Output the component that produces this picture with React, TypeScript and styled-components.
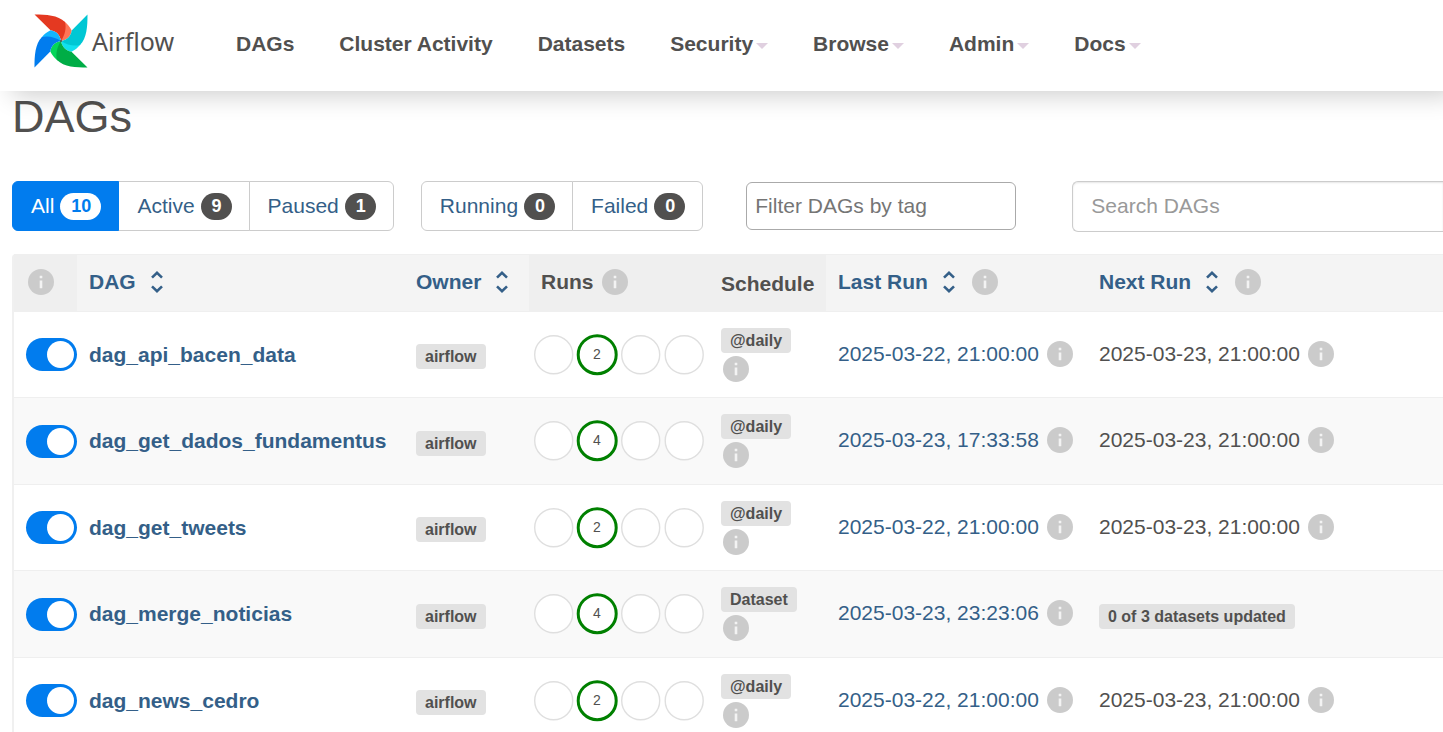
import React from "react";
import styled, { createGlobalStyle, css } from "styled-components";

const GlobalStyle = createGlobalStyle`
  *, *::before, *::after { box-sizing: border-box; }
  body {
    margin: 0;
    background: #fff;
    color: #51504f;
    font-family: "Liberation Sans", Arial, sans-serif;
    font-size: 21px;
    line-height: 30px;
    overflow-x: hidden;
  }
  a { color: #345f88; text-decoration: none; }
  button, input { font: inherit; }
`;

const Navbar = styled.header`
  position: relative;
  display: flex;
  align-items: center;
  height: 91px;
  padding: 0 34px 3px;
  background: #fff;
  box-shadow: 12px 4px 24px rgba(0, 0, 0, 0.2);
`;

const Brand = styled.a`
  display: flex;
  align-items: center;
  gap: 4px;
  width: 179px;
  padding-bottom: 6px;
  color: #51504f;
  font: 25px/30px "Noto Sans", sans-serif;
`;

const NavList = styled.nav`
  display: flex;
  gap: 45px;
`;

const NavLink = styled.a`
  display: flex;
  align-items: center;
  gap: 3px;
  padding-left: 23px;
  margin-right: -23px;
  color: #51504f;
  font-weight: bold;
`;

const Caret = styled.span`
  margin-top: 4px;
  border: 6px solid transparent;
  border-top-color: #e0d0e0;
  border-bottom: 0;
`;

const Main = styled.main`
  padding-left: 12px;
`;

const Title = styled.h1`
  margin: 0 0 38px;
  font-size: 45px;
  line-height: 52px;
  font-weight: normal;
`;

const Toolbar = styled.div`
  display: flex;
  align-items: flex-start;
  margin-bottom: 22px;
`;

const ButtonGroup = styled.div`
  display: flex;
  margin-right: 27px;
`;

const FilterButton = styled.button<{ $active?: boolean }>`
  display: flex;
  align-items: center;
  gap: 6px;
  height: 50px;
  padding: 0 17px 0 18px;
  border: 1px solid #ccc;
  background: #fff;
  color: #345f88;
  & + & { margin-left: -1px; }
  &:first-child { border-radius: 6px 0 0 6px; }
  &:last-child { border-radius: 0 6px 6px 0; }
  ${(p) => p.$active && css`
    position: relative;
    border-color: #017cee;
    background: #017cee;
    color: #fff;
  `}
`;

const Count = styled.span<{ $active?: boolean }>`
  padding: 0 10px 0 11px;
  border-radius: 14px;
  background: ${(p) => (p.$active ? "#fff" : "#51504f")};
  color: ${(p) => (p.$active ? "#017cee" : "#fff")};
  font-size: 18px;
  line-height: 27px;
  font-weight: bold;
`;

const TagInput = styled.input`
  width: 270px;
  height: 48px;
  margin: 1px 56px 0 16px;
  padding: 0 8px;
  border: 1px solid #aaa;
  border-radius: 6px;
  &::placeholder { color: #757575; }
`;

const SearchInput = styled.input`
  flex: 1;
  min-width: 0;
  height: 51px;
  padding: 0 18px 2px;
  border: 1px solid #ccc;
  border-right: 0;
  border-radius: 6px 0 0 6px;
  box-shadow: inset 0 1px 2px rgba(0, 0, 0, 0.1);
  &::placeholder { color: #999; }
`;

const Table = styled.table`
  width: 100%;
  table-layout: fixed;
  border-collapse: separate;
  border-spacing: 0;
  border-left: 2px solid #f0f0f0;
  border-top-left-radius: 4px;
`;

const Th = styled.th<{ $sortable?: boolean }>`
  height: 58px;
  padding: 0 12px 2px;
  border: solid #efefef;
  border-width: 1px 0;
  background: ${(p) => (p.$sortable ? "#f4f4f4" : "#efefef")};
  text-align: left;
  white-space: nowrap;
`;

const Row = styled.tr`
  height: 86px;
  &:nth-child(even) { height: 87px; background: #f9f9f9; }
`;

const Td = styled.td<{ $flush?: boolean }>`
  padding: ${(p) => (p.$flush ? "0 5px" : "0 12px")};
  border-bottom: 1px solid #efefef;
  white-space: nowrap;
  vertical-align: middle;
`;

const Inline = styled.div<{ $gap: number }>`
  display: flex;
  align-items: center;
  gap: ${(p) => p.$gap}px;
`;

const RunDate = styled(Inline)`
  padding-bottom: 2px;
`;

const SortLink = styled.a`
  display: flex;
  align-items: center;
  gap: 15px;
`;

const Lowered = styled.div`
  padding-top: 4px;
`;

const DagLink = styled.a`
  font-weight: bold;
`;

const Switch = styled.input`
  appearance: none;
  display: block;
  width: 51px;
  height: 33px;
  margin: 0;
  padding: 3px;
  border-radius: 17px;
  background: #cbcbcb;
  &::before {
    content: "";
    display: block;
    width: 27px;
    height: 27px;
    border-radius: 50%;
    background: #fff;
  }
  &:checked { background: #017cee; }
  &:checked::before { margin-left: 18px; }
`;

const Label = styled.a`
  display: block;
  width: fit-content;
  padding: 0 9px;
  border-radius: 4px;
  background: #e2e2e2;
  color: #51504f;
  font-size: 16px;
  line-height: 25px;
  font-weight: bold;
`;

const InfoStack = styled.div`
  display: grid;
  gap: 3px;
  svg { margin-left: 2px; }
`;

const InfoIcon = styled.svg`
  display: block;
  flex: none;
`;

const Info = () => (
  <InfoIcon width="26" height="26" viewBox="0 0 26 26" role="img" aria-label="Information">
    <circle cx="13" cy="13" r="13" fill="#cbcbcb" />
    <path d="M11.700 6.800h2.600v2.400h-2.600zM11.700 11.400h2.600v7.800h-2.600z" fill="#f3f3f3" />
  </InfoIcon>
);

const SortIcon = () => (
  <svg width="12" height="22" viewBox="0 0 12 22" fill="none" stroke="#345f88" strokeWidth="2.6" aria-hidden="true">
    <path d="M1 6.600 6 1.800l5 4.800M1 15.400l5 4.800 5-4.800" />
  </svg>
);

const blades = [
  { turn: 0, dark: "#e43921", light: "#ff7557" },
  { turn: 90, dark: "#00c7d4", light: "#11e1ee" },
  { turn: 180, dark: "#00ad46", light: "#04d659" },
  { turn: 270, dark: "#017cee", light: "#11b5ff" },
];

const Logo = () => (
  <svg width="54" height="54" viewBox="0 0 54 54" aria-hidden="true">
    {blades.map((b) => (
      <g key={b.turn} transform={`rotate(${b.turn} 27 27)`}>
        <path d="M31 8C33.500 10 36 13 37.700 16.500 37 22 33 26 27 27 29 20 31 14 29 7z" fill={b.light} />
        <path d="M.5.5C12 .5 24 1 31 8 32.500 14 31 21 27 27 26 21 22 17 16.500 16.300z" fill={b.dark} />
      </g>
    ))}
    <circle cx="27" cy="27" r="1" fill="#51504f" />
  </svg>
);

const navItems: [string, boolean][] = [
  ["DAGs", false],
  ["Cluster Activity", false],
  ["Datasets", false],
  ["Security", true],
  ["Browse", true],
  ["Admin", true],
  ["Docs", true],
];

const RunRing = styled.svg`
  display: block;
`;

const Runs = ({ success }: { success: number }) => (
  <RunRing width="170" height="42" viewBox="0 0 170 42" role="img" aria-label={`${success} successful runs`}>
    {[0, 1, 2, 3].map((i) => (
      <circle
        key={i}
        cx={19.7 + i * 43.5}
        cy="20.700"
        r={19}
        fill="#fff"
        stroke={i === 1 ? "#008000" : "#dfdfdf"}
        strokeWidth={i === 1 ? 3 : 1.4}
      />
    ))}
    <text x="63" y="25" textAnchor="middle" fontSize="14" fill="#51504f">{success}</text>
  </RunRing>
);

const dags = [
  { id: "dag_api_bacen_data", runs: 2, schedule: "@daily", last: "2025-03-22, 21:00:00" },
  { id: "dag_get_dados_fundamentus", runs: 4, schedule: "@daily", last: "2025-03-23, 17:33:58" },
  { id: "dag_get_tweets", runs: 2, schedule: "@daily", last: "2025-03-22, 21:00:00" },
  { id: "dag_merge_noticias", runs: 4, schedule: "Dataset", last: "2025-03-23, 23:23:06" },
  { id: "dag_news_cedro", runs: 2, schedule: "@daily", last: "2025-03-22, 21:00:00" },
];

const Sortable = ({ children }: { children: string }) => (
  <SortLink href="#">
    {children}
    <SortIcon />
  </SortLink>
);

export default function App() {
  return (
    <>
      <GlobalStyle />
      <Navbar>
        <Brand href="#"><Logo />Airflow</Brand>
        <NavList>
          {navItems.map(([name, menu]) => (
            <NavLink href="#" key={name}>{name}{menu && <Caret />}</NavLink>
          ))}
        </NavList>
      </Navbar>
      <Main>
        <Title>DAGs</Title>
        <Toolbar>
          <ButtonGroup>
            <FilterButton $active>All<Count $active>10</Count></FilterButton>
            <FilterButton>Active<Count>9</Count></FilterButton>
            <FilterButton>Paused<Count>1</Count></FilterButton>
          </ButtonGroup>
          <ButtonGroup>
            <FilterButton>Running<Count>0</Count></FilterButton>
            <FilterButton>Failed<Count>0</Count></FilterButton>
          </ButtonGroup>
          <TagInput aria-label="Filter DAGs by tag" placeholder="Filter DAGs by tag" />
          <SearchInput aria-label="Search DAGs" placeholder="Search DAGs" />
        </Toolbar>
        <Table>
          <colgroup>
            <col width="63" />
            <col width="327" />
            <col width="125" />
            <col width="180" />
            <col width="117" />
            <col width="261" />
            <col />
          </colgroup>
          <thead>
            <tr>
              <Th><InfoStack><Info /></InfoStack></Th>
              <Th $sortable><Sortable>DAG</Sortable></Th>
              <Th $sortable><Sortable>Owner</Sortable></Th>
              <Th><Inline $gap={8}>Runs<Info /></Inline></Th>
              <Th><Lowered>Schedule</Lowered></Th>
              <Th $sortable><Inline $gap={17}><Sortable>Last Run</Sortable><Info /></Inline></Th>
              <Th $sortable><Inline $gap={17}><Sortable>Next Run</Sortable><Info /></Inline></Th>
            </tr>
          </thead>
          <tbody>
            {dags.map((dag) => (
              <Row key={dag.id}>
                <Td><Switch type="checkbox" defaultChecked aria-label={`Enable ${dag.id}`} /></Td>
                <Td><DagLink href="#">{dag.id}</DagLink></Td>
                <Td><Lowered><Label href="#">airflow</Label></Lowered></Td>
                <Td $flush><Runs success={dag.runs} /></Td>
                <Td><InfoStack><Label href="#">{dag.schedule}</Label><Info /></InfoStack></Td>
                <Td><RunDate $gap={8}><a href="#">{dag.last}</a><Info /></RunDate></Td>
                <Td>
                  {dag.schedule === "Dataset"
                    ? <Lowered><Label href="#">0 of 3 datasets updated</Label></Lowered>
                    : <RunDate $gap={8}>2025-03-23, 21:00:00<Info /></RunDate>}
                </Td>
              </Row>
            ))}
          </tbody>
        </Table>
      </Main>
    </>
  );
}
